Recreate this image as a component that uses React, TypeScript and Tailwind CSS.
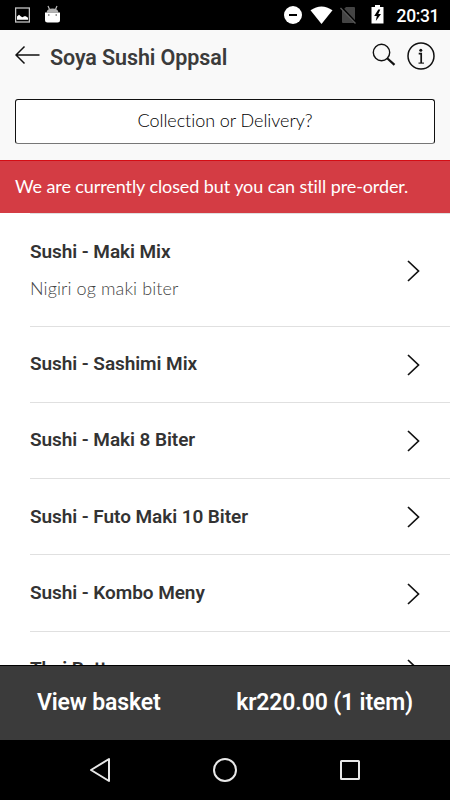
import { clsx } from 'clsx';

const categories = [
  { name: 'Sushi - Maki Mix', description: 'Nigiri og maki biter', height: 'h-[113px]' },
  { name: 'Sushi - Sashimi Mix', height: 'h-[76px] pb-px' },
  { name: 'Sushi - Maki 8 Biter', height: 'h-[76px] pb-px' },
  { name: 'Sushi - Futo Maki 10 Biter', height: 'h-[76px]' },
  { name: 'Sushi - Kombo Meny', height: 'h-[77px]' },
  { name: 'Thai Retter', height: 'h-[76px] pb-px' },
];

function StatusBar() {
  return (
    <div className="flex h-[30px] shrink-0 items-center justify-between bg-black pr-[11px] pl-[15px]">
      <div className="flex items-center gap-[15px]">
        <svg width="15" height="16" viewBox="0 0 15 16">
          <rect x="0.6" y="1" width="13.8" height="14" fill="none" stroke="#c4c4c4" strokeWidth="1.3" />
          <path d="M2 12.8V9.5l2-1.7 2 1.7 1.5.8 1.7-1h1.6l2.2 1.5v2z" fill="#fff" />
        </svg>
        <svg className="-mt-[3px]" width="15" height="18" viewBox="0 0 15 18">
          <path d="M3 1l1.8 4M12 1l-1.8 4" stroke="#bbb" strokeWidth="1.2" />
          <path d="M1.5 7.5Q2 3.5 7.5 3.5t6 4z" fill="#b3b3b3" />
          <path d="M0 7.5h15V15q0 2.5-2.5 2.5h-10Q0 17.5 0 15z" fill="#fff" />
          <path d="M3 9.2h1.5v1.5H3zM10.5 9.2H12v1.5h-1.5z" fill="#777" />
        </svg>
      </div>
      <div className="flex items-center">
        <svg width="18" height="18" viewBox="0 0 18 18">
          <circle cx="9" cy="9" r="9" fill="#fff" />
          <path d="M5 9h8" stroke="#000" strokeWidth="2" />
        </svg>
        <svg className="ml-2" width="23" height="18" viewBox="0 0 23 18">
          <path d="M0.5 4.3Q11.5-3.5 22.5 4.3L11.5 18z" fill="#fff" />
        </svg>
        <svg className="ml-[7px]" width="17" height="18" viewBox="0 0 17 18">
          <path d="M6 1h8q1 0 1 1v14q0 1-1 1H3q-1 0-1-1V5z" fill="#444" />
          <path d="M1.5 1.5l15 16" stroke="#000" strokeWidth="2.4" />
          <path d="M0.5 2l15 15.5" stroke="#5a5a5a" strokeWidth="1.3" />
        </svg>
        <svg className="ml-[14px] -mt-px" width="13" height="19" viewBox="0 0 13 19">
          <path d="M4 0h5v2h3.5v16.5H0.5V2H4z" fill="#fff" />
          <path d="M7.3 4.5L3.2 11h2.6l-1 5L10 9H7.3l2-4.5z" fill="#000" />
        </svg>
        <span className="mt-px ml-[13px] text-[17.5px] leading-[30px] font-medium tracking-[-0.4px] text-white">20:31</span>
      </div>
    </div>
  );
}

function Header() {
  return (
    <header className="h-[130px] shrink-0 bg-[#f9f9f9] px-[15px]">
      <div className="flex h-[69px] items-start pt-[11px]">
        <svg className="mt-[4px]" width="25" height="20" viewBox="0 0 25 20" fill="none" stroke="#111" strokeWidth="1.5">
          <path d="M9.5 1.5L1 10l8.5 8.5M1 10h23.5" />
        </svg>
        <h1 className="mt-px ml-[10px] text-[21.5px] leading-[32px] font-semibold tracking-[-0.1px] text-[#3b3b3b]">
          Soya Sushi Oppsal
        </h1>
        <svg className="mt-[2px] ml-auto" width="24" height="24" viewBox="0 0 24 24" fill="none" stroke="#111">
          <circle cx="9.5" cy="9.5" r="8.2" strokeWidth="1.4" />
          <path d="M15.2 15.2l7.3 6.7" strokeWidth="2.2" />
        </svg>
        <svg className="ml-[11px]" width="28" height="30" viewBox="0 0 28 30">
          <circle cx="14" cy="15" r="13" fill="none" stroke="#111" strokeWidth="1.5" />
          <circle cx="13.8" cy="9.2" r="1.5" fill="#111" />
          <path d="M11.7 12.7h2.5V22" fill="none" stroke="#111" strokeWidth="1.7" />
          <path d="M11.5 22.1H17" fill="none" stroke="#111" strokeWidth="1.1" />
        </svg>
      </div>
      <button
        type="button"
        className="block h-[45px] w-full rounded-[3px] border border-[#111] border-b-[#777] bg-white pb-0.5 text-center font-[Lato] text-[18px] font-light tracking-[-0.05px] text-black [font-variant-ligatures:none]"
      >
        Collection or Delivery?
      </button>
    </header>
  );
}

function Chevron() {
  return (
    <svg className="mt-px" width="13" height="22" viewBox="0 0 13 22" fill="none" stroke="#111" strokeWidth="1.7">
      <path d="M1 1l10.5 10L1 21" />
    </svg>
  );
}

export default function App() {
  return (
    <div className="flex h-[800px] w-[450px] flex-col overflow-hidden bg-white font-[Roboto,sans-serif]">
      <StatusBar />
      <Header />
      <div className="h-[53px] shrink-0 border-t border-[#d40d14] bg-[#d43c44] px-[15px] font-[Lato] text-[18px] leading-[50px] tracking-[-0.09px] text-white [font-variant-ligatures:none]">
        We are currently closed but you can still pre-order.
      </div>
      <main className="min-h-0 flex-1 overflow-hidden pl-[30px]">
        {categories.map((category) => (
          <div
            key={category.name}
            className={clsx('flex items-center justify-between border-t border-[#e0e0e0] pr-[30px]', category.height)}
          >
            <div>
              <h2 className="text-[19px] leading-[24px] font-semibold tracking-[-0.07px] text-[#333]">{category.name}</h2>
              {category.description && (
                <p className="mt-[12px] mb-px font-[Lato] text-[18px] leading-[24px] font-light tracking-[0.1px] text-[#444] [font-variant-ligatures:none]">
                  {category.description}
                </p>
              )}
            </div>
            <Chevron />
          </div>
        ))}
      </main>
      <button
        type="button"
        className="flex h-[75px] shrink-0 items-center justify-between border-t border-black bg-[#3b3b3b] px-[37px] text-[23px] font-semibold tracking-[-0.15px] text-white"
      >
        <span>View basket</span>
        <span>kr220.00 (1 item)</span>
      </button>
      <nav className="flex h-[60px] shrink-0 items-center bg-black pl-[89px]">
        <svg width="272" height="26" viewBox="0 0 272 26" fill="none" stroke="#e8e8e8" strokeWidth="2">
          <path d="M2 13L20 2v22z" strokeLinejoin="round" />
          <circle cx="136" cy="13" r="11" />
          <rect x="252" y="4" width="18" height="18" rx="0.5" />
        </svg>
      </nav>
    </div>
  );
}
